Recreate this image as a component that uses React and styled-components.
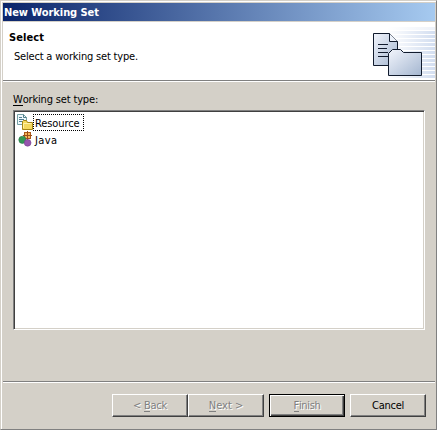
import React from 'react';
import styled, { createGlobalStyle, css } from 'styled-components';

const GlobalStyle = createGlobalStyle`
  * { box-sizing: border-box; }
  body { margin: 0; background: #d4d0c8; overflow: hidden; }
`;

const Dialog = styled.div`
  width: 437px;
  height: 430px;
  display: flex;
  flex-direction: column;
  background: #d4d0c8;
  border: 1px solid;
  border-color: #d4d0c8 #808080 #808080 #d4d0c8;
  box-shadow: inset 1px 1px 0 #ffffff;
  padding: 2px 1px 0 2px;
  font-family: 'DejaVu Sans Condensed', 'DejaVu Sans', sans-serif;
  font-stretch: condensed;
  font-size: 11px;
  line-height: 14px;
  color: #000;
  cursor: default;
`;

const TitleBar = styled.div`
  height: 18px;
  flex: none;
  padding: 3px 0 0 1px;
  background: linear-gradient(90deg, #0a246a, #a6caf0);
  color: #fff;
`;

const Text = styled.span`
  display: inline-block;
  white-space: pre;
  font-weight: ${(p) => (p.$bold ? 700 : 400)};
  letter-spacing: ${(p) => p.$track || 0}px;
`;

const Header = styled.header`
  height: 60px;
  flex: none;
  display: flex;
  justify-content: space-between;
  margin-top: 1px;
  background: #fff;
  border-bottom: 1px solid #fff;
  box-shadow: inset 0 -1px 0 #808080;
`;

const Heading = styled.div`
  display: flex;
  flex-direction: column;
  align-items: flex-start;
  gap: 5px;
  padding: 9px 0 0 6px;
`;

const Description = styled.div`
  padding-left: 5px;
`;

const Banner = styled.svg`
  width: 72px;
  height: 58px;
  display: block;
`;

const Content = styled.main`
  flex: none;
  height: 299px;
  padding: 11px 9px 0 10px;
`;

const Label = styled.label`
  display: block;
  height: 17px;
`;

const List = styled.div`
  width: 412px;
  height: 220px;
  border: 1px solid;
  border-color: #808080 #fff #fff #808080;
  box-shadow: inset 1px 1px 0 #404040, inset -1px -1px 0 #d4d0c8;
  background-color: #fff;
  padding: 3px 2px;
`;

const ListItem = styled.div`
  display: flex;
  height: 17px;
`;

const ItemIcon = styled.svg`
  width: 16px;
  height: 16px;
  flex: none;
  margin-left: 1px;
`;

const ItemLabel = styled.span`
  height: 17px;
  padding: 2px 3px 0 1px;
  line-height: 14px;
  border: 1px ${(p) => (p.$focused ? 'dotted #000' : 'solid transparent')};
`;

const Footer = styled.footer`
  flex: 1;
  display: flex;
  justify-content: flex-end;
  align-items: flex-start;
  gap: 5px;
  border-top: 1px solid #808080;
  box-shadow: inset 0 1px 0 #fff;
  padding: 12px 9px 0 0;
`;

const ButtonPair = styled.div`
  display: flex;
`;

const Button = styled.button`
  width: 76px;
  height: 23px;
  display: flex;
  justify-content: center;
  padding: 4px 0 0;
  font: inherit;
  color: #000;
  background: #d4d0c8;
  border: 1px solid;
  border-color: #fff #404040 #404040 #fff;
  border-radius: 0;
  box-shadow: inset -1px -1px 0 #808080;
  ${(p) => p.disabled && css`
    color: #808080;
    text-shadow: 1px 1px 0 #fff;
  `}
  ${(p) => p.$primary && css`
    border-color: #000;
    box-shadow: inset 1px 1px 0 #fff, inset -1px -1px 0 #404040, inset -2px -2px 0 #808080;
  `}
`;

const Mnemonic = styled.span`
  border-bottom: 1px solid currentColor;
  display: inline-block;
  height: 13px;
  line-height: 14px;
  vertical-align: top;
`;

function BannerArt() {
  return (
    <Banner viewBox="363 22 72 58">
      <defs>
        <linearGradient id="stripe" gradientUnits="userSpaceOnUse" x1="387" y1="0" x2="435" y2="0">
          <stop offset="0" stopColor="#fff" />
          <stop offset="1" stopColor="#d3def0" />
        </linearGradient>
        <linearGradient id="paper" x1="0" y1="0" x2="1" y2="1">
          <stop offset="0" stopColor="#f2f5fc" />
          <stop offset="1" stopColor="#a4b6d0" />
        </linearGradient>
      </defs>
      {[27, 31, 35, 39, 43, 47, 51, 55, 59, 63, 67, 71, 75].map((y) => (
        <rect
          key={y}
          x="387"
          y={y}
          width="48"
          height="3"
          fill="url(#stripe)"
          opacity={y < 31 ? 0.4 : 1}
        />
      ))}
      <path d="M373.5 33.5h16l8 8v24h-24z" fill="url(#paper)" stroke="#111b2d" />
      <path d="M389.5 33.5v8h8" fill="#edf2fa" stroke="#111b2d" />
      <path d="M378 44.5h10M378 48.5h9M378 52.5h10M378 56.5h10" stroke="#111b2d" />
      <path d="M388.5 75.5v-22l4-4h8l3 3h18v23z" fill="url(#paper)" stroke="#111b2d" />
    </Banner>
  );
}

function ResourceIcon() {
  return (
    <ItemIcon viewBox="0 0 16 16">
      <path d="M.5.5h6l3 3v7h-9z" fill="#eff8fc" stroke="#75a1a6" />
      <path d="M6.5.5v3h3" fill="none" stroke="#507f8b" />
      <path d="M2 3.5h3M2 5.5h5M2 7.5h4" stroke="#507e93" />
      <path d="M5.5 15.5v-8l1-1h3l1 2h5v7z" fill="#f4d85d" stroke="#a78613" />
      <path d="M6.5 14V9.5h8" fill="none" stroke="#fff1a5" />
    </ItemIcon>
  );
}

function JavaIcon() {
  return (
    <ItemIcon viewBox="0 0 16 16">
      <rect x="7.5" y="1.5" width="6" height="6" fill="#f5b65a" stroke="#a95918" />
      <path d="M10.5 0v9M6 4.5h9" stroke="#9b4d18" />
      <circle cx="5.4" cy="8.8" r="3.6" fill="#329854" stroke="#267647" strokeWidth=".6" />
      <circle cx="10.6" cy="11.8" r="3.4" fill="#9555ad" stroke="#75428e" strokeWidth=".6" />
    </ItemIcon>
  );
}

export default function App() {
  return (
    <>
      <GlobalStyle />
      <Dialog>
        <TitleBar><Text $bold $track={-0.07}>New Working Set</Text></TitleBar>
        <Header>
          <Heading>
            <Text $bold $track={0.1}>Select</Text>
            <Description><Text $track={-0.19}>Select a working set type.</Text></Description>
          </Heading>
          <BannerArt />
        </Header>
        <Content>
          <Label><Text $track={-0.16}><Mnemonic>W</Mnemonic>orking set type:</Text></Label>
          <List>
            <ListItem>
              <ResourceIcon />
              <ItemLabel $focused><Text $track={-0.1}>Resource</Text></ItemLabel>
            </ListItem>
            <ListItem>
              <JavaIcon />
              <ItemLabel><Text $track={0.4}>Java</Text></ItemLabel>
            </ListItem>
          </List>
        </Content>
        <Footer>
          <ButtonPair>
            <Button disabled><Text $track={-0.25}>{'< '}<Mnemonic>B</Mnemonic>ack</Text></Button>
            <Button disabled><Text><Mnemonic>N</Mnemonic>{'ext >'}</Text></Button>
          </ButtonPair>
          <Button disabled $primary><Text $track={-0.35}><Mnemonic>F</Mnemonic>inish</Text></Button>
          <Button><Text $track={-0.25}>Cancel</Text></Button>
        </Footer>
      </Dialog>
    </>
  );
}
